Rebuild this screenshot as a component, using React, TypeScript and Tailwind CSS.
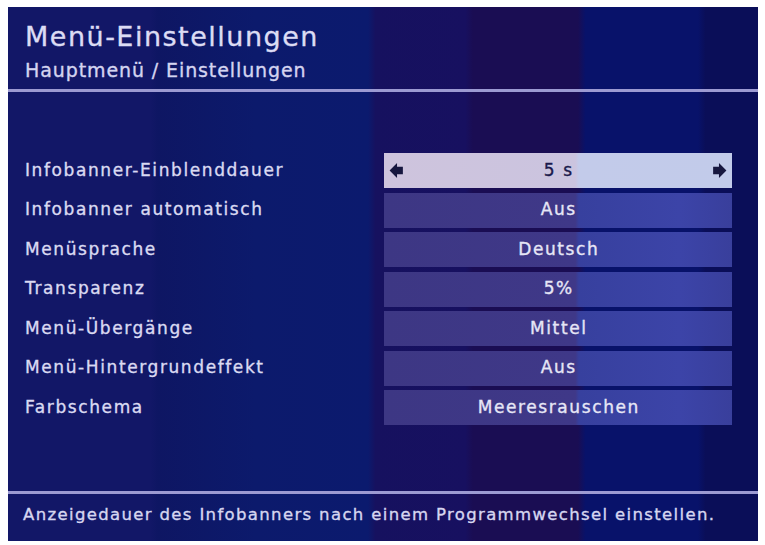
import React from 'react'

type Row = { label: string; value: string }

const rows: Row[] = [
  { label: 'Infobanner-Einblenddauer', value: '5 s' },
  { label: 'Infobanner automatisch', value: 'Aus' },
  { label: 'Menüsprache', value: 'Deutsch' },
  { label: 'Transparenz', value: '5%' },
  { label: 'Menü-Übergänge', value: 'Mittel' },
  { label: 'Menü-Hintergrundeffekt', value: 'Aus' },
  { label: 'Farbschema', value: 'Meeresrauschen' },
]

function Arrow({ dir }: { dir: 'left' | 'right' }) {
  // fetter Pfeil: Spitze + kurzer Schaft
  return (
    <svg width="15" height="17" viewBox="0 0 14 16" className={dir === 'right' ? 'rotate-180' : ''}>
      <path d="M0.5 8 L7.5 1 L7.5 4.5 L13 4.5 L13 11.5 L7.5 11.5 L7.5 15 Z" fill="#17173f" />
    </svg>
  )
}

export default function App() {
  return (
    <div className="w-[765px] h-[545px] bg-white pt-[7px] pl-[8px] [font-family:'DejaVu_Sans',sans-serif] [-webkit-text-stroke:0.35px_currentColor]">
      <div className="w-[750px] h-[534px] flex flex-col bg-[linear-gradient(90deg,#121767_0%,#121767_19%,#0e1663_20%,#0c1a6c_33%,#0b1a6e_48%,#16115f_49%,#171060_61%,#1a0d53_62%,#1a0d53_76%,#08126a_77%,#08126a_92%,#0a0e58_93%,#0a0e58_100%)]">
        {/* Kopf */}
        <div className="pt-[14px] pl-[17px]">
          <div className="text-[27px] leading-[32px] text-[#dcdcf4] tracking-[1.5px]">Menü-Einstellungen</div>
          <div className="mt-[6px] text-[19px] leading-[22px] text-[#d4d4f0] tracking-[0.9px]">Hauptmenü / Einstellungen</div>
        </div>
        <div className="mt-[8px] h-[3px] bg-[#9c9ad2]" />

        {/* Einstellungen */}
        <div className="mt-[61px] flex flex-col gap-[4.5px]">
          {rows.map((r, i) => {
            const active = i === 0
            return (
              <div key={r.label} className="flex items-center h-[35px]">
                <div className="w-[376px] pl-[17px] text-[17px] text-[#dadaf2] tracking-[1.6px]">{r.label}</div>
                <div
                  className={`w-[348px] h-full flex items-center justify-between px-[5px] text-[17px] ${
                    active
                      ? 'bg-[linear-gradient(90deg,#cec4dd_0%,#cbc4df_55%,#c3cbea_56%,#c2cbea_100%)] text-[#1b1a4c]'
                      : 'bg-[linear-gradient(90deg,#3d3784_0%,#3f3888_55%,#37409e_56%,#3c44a8_85%,#393f9c_100%)] text-[#e6e6f6]'
                  }`}
                >
                  <span className="w-[15px] flex">{active && <Arrow dir="left" />}</span>
                  <span className="tracking-[1.6px] pl-[1.6px]">{r.value}</span>
                  <span className="w-[15px] flex">{active && <Arrow dir="right" />}</span>
                </div>
              </div>
            )
          })}
        </div>

        <div className="flex-1" />

        {/* Fußzeile */}
        <div className="h-[3px] bg-[#9c9ad2]" />
        <div className="h-[47px] pl-[15px] pt-[10px] text-[16.5px] leading-[22px] text-[#d6d6f0] tracking-[1.35px] whitespace-nowrap">
          Anzeigedauer des Infobanners nach einem Programmwechsel einstellen.
        </div>
      </div>
    </div>
  )
}
